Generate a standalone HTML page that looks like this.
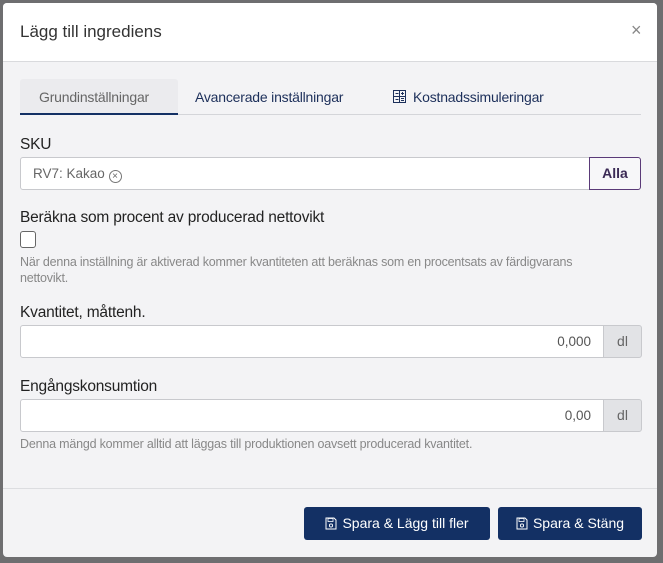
<!DOCTYPE html><html><head><style>
body{margin:0;width:663px;height:563px;background:#6e6e70;font-family:"Liberation Sans",sans-serif;position:relative;overflow:hidden}
.m{position:absolute;left:3px;top:3px;width:654px;height:554px;background:#f3f3f5;border-radius:4px;overflow:hidden}
.a{position:absolute;white-space:nowrap}
.hd{position:absolute;left:0;top:0;width:654px;height:58px;background:#fff;border-bottom:1px solid #d9dadd}
.lbl{font-size:15.5px;color:#222;letter-spacing:-.2px}
.inp{position:absolute;left:17px;width:582px;height:31px;background:#fff;border:1px solid #c8c9cd;border-radius:3px 0 0 3px}
.ad{position:absolute;left:600px;width:37px;height:31px;background:#e2e3e6;border:1px solid #c8c9cd;border-radius:0 3px 3px 0;color:#666;font-size:14px;text-align:center;line-height:31px}
.val{position:absolute;right:12px;top:8px;font-size:13.5px;color:#555}
.help{font-size:12.5px;color:#888;letter-spacing:-.2px}
.btn{position:absolute;top:504px;height:33px;background:#133064;border-radius:3px;color:#fff;font-size:14px;line-height:33px;text-align:center}
.btn svg{vertical-align:-2px;margin-right:5px}
</style></head><body>
<div class="m">
<div class="hd"><div class="a" style="left:17px;top:19px;font-size:17px;color:#333">Lägg till ingrediens</div><div class="a" style="left:628px;top:17px;font-size:18px;color:#888">×</div></div>
<div class="a" style="left:17px;top:76px;width:158px;height:36px;background:#ebebee;border-radius:3px 3px 0 0"></div>
<div class="a" style="left:17px;top:111px;width:621px;height:1px;background:#d4d5d9"></div>
<div class="a" style="left:17px;top:110px;width:158px;height:2px;background:#133064"></div>
<div class="a" style="left:36px;top:86px;font-size:14px;color:#666;letter-spacing:-.2px">Grundinställningar</div>
<div class="a" style="left:192px;top:86px;font-size:14px;color:#1c2f5a;letter-spacing:-.2px">Avancerade inställningar</div>
<svg class="a" style="left:390px;top:87px" width="13" height="13" viewBox="0 0 13 13"><rect x=".5" y=".5" width="12" height="12" fill="none" stroke="#1c2f5a"/><path d="M6.5 1v11M1 6.5h11M2.5 3.5h3M8 3.5h3M9.5 2v3M2.5 9.5h3M8 8.5h3M8 10.5h3" stroke="#1c2f5a" stroke-width="1"/></svg>
<div class="a" style="left:410px;top:86px;font-size:14px;color:#1c2f5a;letter-spacing:-.2px">Kostnadssimuleringar</div>
<div class="a lbl" style="left:17px;top:133px">SKU</div>
<div class="inp" style="top:154px;width:568px"><div class="a" style="left:12px;top:8px;font-size:13.5px;color:#666">RV7: Kakao <span style="display:inline-block;width:11px;height:11px;border:1px solid #777;border-radius:50%;font-size:10px;line-height:11px;text-align:center;vertical-align:-1px">×</span></div></div>
<div class="a" style="left:586px;top:154px;width:50px;height:31px;border:1px solid #5a3a78;border-radius:0 3px 3px 0;background:#f7f7f9;color:#3b2a55;font-size:14px;font-weight:bold;text-align:center;line-height:31px">Alla</div>
<div class="a lbl" style="left:17px;top:206px">Beräkna som procent av producerad nettovikt</div>
<div class="a" style="left:17px;top:228px;width:14px;height:15px;border:1px solid #666;border-radius:3px;background:#fff"></div>
<div class="a help" style="left:17px;top:251px;line-height:16px">När denna inställning är aktiverad kommer kvantiteten att beräknas som en procentsats av färdigvarans<br>nettovikt.</div>
<div class="a lbl" style="left:17px;top:301px">Kvantitet, måttenh.</div>
<div class="inp" style="top:322px"><div class="val">0,000</div></div><div class="ad" style="top:322px">dl</div>
<div class="a lbl" style="left:17px;top:375px">Engångskonsumtion</div>
<div class="inp" style="top:396px"><div class="val">0,00</div></div><div class="ad" style="top:396px">dl</div>
<div class="a help" style="left:17px;top:434px">Denna mängd kommer alltid att läggas till produktionen oavsett producerad kvantitet.</div>
<div class="a" style="left:0;top:485px;width:654px;height:1px;background:#dcdde0"></div>
<div class="btn" style="left:301px;width:186px"><svg width="12" height="13" viewBox="0 0 12 13"><path d="M1 1h8l2 2v9H1z" fill="none" stroke="#fff"/><rect x="3" y="1.5" width="5" height="3" fill="none" stroke="#fff" stroke-width=".8"/><circle cx="6" cy="8.5" r="1.6" fill="none" stroke="#fff" stroke-width=".9"/></svg>Spara &amp; Lägg till fler</div>
<div class="btn" style="left:495px;width:144px"><svg width="12" height="13" viewBox="0 0 12 13"><path d="M1 1h8l2 2v9H1z" fill="none" stroke="#fff"/><rect x="3" y="1.5" width="5" height="3" fill="none" stroke="#fff" stroke-width=".8"/><circle cx="6" cy="8.5" r="1.6" fill="none" stroke="#fff" stroke-width=".9"/></svg>Spara &amp; Stäng</div>
</div>
</body></html>
